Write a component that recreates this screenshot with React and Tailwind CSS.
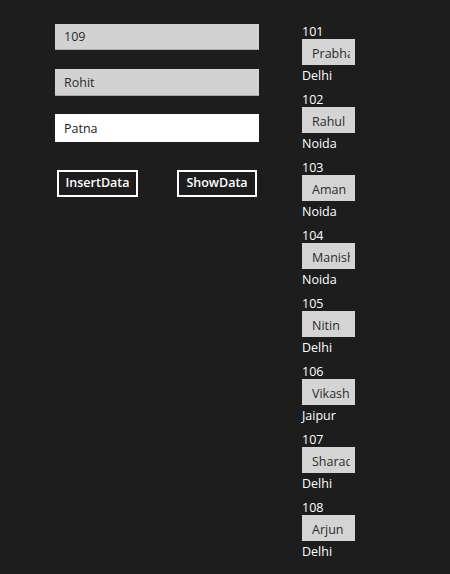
import { useState } from "react";

const students = [
  { id: "101", name: "Prabhat", city: "Delhi" },
  { id: "102", name: "Rahul", city: "Noida" },
  { id: "103", name: "Aman", city: "Noida" },
  { id: "104", name: "Manish", city: "Noida" },
  { id: "105", name: "Nitin", city: "Delhi" },
  { id: "106", name: "Vikash", city: "Jaipur" },
  { id: "107", name: "Sharad", city: "Delhi" },
  { id: "108", name: "Arjun", city: "Delhi" },
];

const App = () => {
  const [rollNo, setRollNo] = useState("109");
  const [name, setName] = useState("Rohit");
  const [city, setCity] = useState("Patna");

  return (
    <div
      className="w-[450px] h-[574px] bg-[#1d1d1d] flex overflow-hidden text-white"
      style={{ fontFamily: '"Open Sans", "Noto Sans", sans-serif' }}
    >
      <div className="ml-[55px] mt-[24px] w-[204px] flex flex-col">
        <input
          value={rollNo}
          onChange={(e) => setRollNo(e.target.value)}
          className="h-[26px] w-full bg-[#d2d2d2] border-b border-[#a9a9a9] pl-[9px] text-[12.5px] text-[#2b2b2b] outline-none"
        />
        <input
          value={name}
          onChange={(e) => setName(e.target.value)}
          className="mt-[19px] h-[27px] w-full bg-[#d2d2d2] border-b border-[#a9a9a9] pl-[9px] text-[12.5px] text-[#2b2b2b] outline-none"
        />
        <input
          value={city}
          onChange={(e) => setCity(e.target.value)}
          className="mt-[18px] h-[28px] w-full bg-white pl-[9px] text-[12.5px] text-[#1b1b1b] outline-none"
        />
        <div className="mt-[28px] flex">
          <button className="ml-[2px] w-[81px] h-[27px] border-2 border-white text-[12.5px] font-semibold">
            InsertData
          </button>
          <button className="ml-[39px] w-[80px] h-[27px] border-2 border-white text-[12.5px] font-semibold">
            ShowData
          </button>
        </div>
      </div>

      <div className="ml-[43px] mt-[25px] flex flex-col gap-[13px]">
        {students.map((s) => (
          <div key={s.id} className="flex flex-col">
            <div className="h-[14px] text-[12.5px] leading-[14px]">{s.id}</div>
            <div className="h-[26px] w-[53px] bg-[#d4d4d4] pl-[10px] flex items-center">
              <div className="w-[38px] overflow-hidden">
                <span className="text-[12.5px] text-[#2b2b2b] whitespace-nowrap">
                  {s.name}
                </span>
              </div>
            </div>
            <div className="h-[15px] text-[12.5px] leading-[21px]">{s.city}</div>
          </div>
        ))}
      </div>
    </div>
  );
};

export default App;
